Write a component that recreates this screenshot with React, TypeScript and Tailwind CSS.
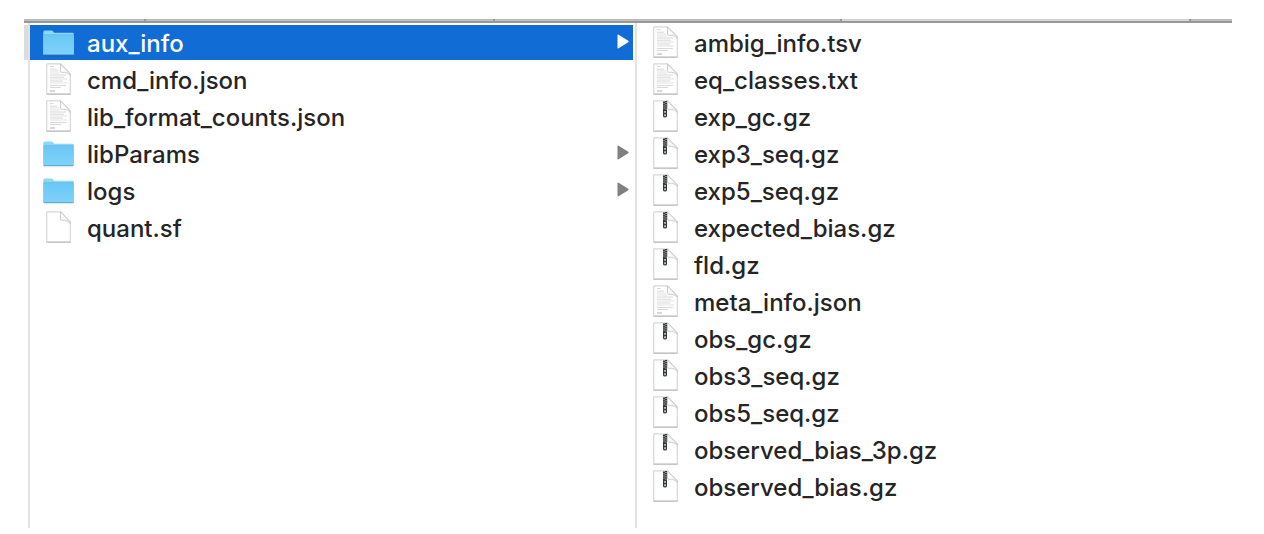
import { useId, useState } from "react";
import clsx from "clsx";

type Kind = "folder" | "text" | "blank" | "archive";

interface Entry {
  name: string;
  kind: Kind;
}

const parentEntries: Entry[] = [
  { name: "aux_info", kind: "folder" },
  { name: "cmd_info.json", kind: "text" },
  { name: "lib_format_counts.json", kind: "text" },
  { name: "libParams", kind: "folder" },
  { name: "logs", kind: "folder" },
  { name: "quant.sf", kind: "blank" },
];

const childEntries: Entry[] = [
  { name: "ambig_info.tsv", kind: "text" },
  { name: "eq_classes.txt", kind: "text" },
  { name: "exp_gc.gz", kind: "archive" },
  { name: "exp3_seq.gz", kind: "archive" },
  { name: "exp5_seq.gz", kind: "archive" },
  { name: "expected_bias.gz", kind: "archive" },
  { name: "fld.gz", kind: "archive" },
  { name: "meta_info.json", kind: "text" },
  { name: "obs_gc.gz", kind: "archive" },
  { name: "obs3_seq.gz", kind: "archive" },
  { name: "obs5_seq.gz", kind: "archive" },
  { name: "observed_bias_3p.gz", kind: "archive" },
  { name: "observed_bias.gz", kind: "archive" },
];

function FolderIcon() {
  const id = useId();
  return (
    <svg viewBox="0 0 32 32" className="h-8 w-8" aria-hidden="true">
      <defs>
        <linearGradient id={id} x1="0" y1="0" x2="0" y2="1">
          <stop offset="0" stopColor="#6ac8f5" />
          <stop offset="1" stopColor="#7fd2f9" />
        </linearGradient>
      </defs>
      <path d="M.3 28V6Q.3 4.500 1.800 4.500H8.500Q9.500 4.500 10.300 5.600L11 6.800H29.500Q30.800 6.800 30.800 8.200V28Z" fill="#8dd8f7" />
      <path d="M.3 9H30.800V28Q30.800 29 29.800 29H1.300Q.3 29 .3 28Z" fill={`url(#${id})`} />
      <path d="M.6 8.700H30.500" stroke="#5fb9e4" strokeWidth=".8" />
      <path d="M.6 28.600H30.500" stroke="#58a9d0" strokeWidth="1" />
      <path d="M1 29.800H30" stroke="#000" strokeOpacity=".12" strokeWidth=".8" />
    </svg>
  );
}

function PageIcon({ kind }: { kind: Kind }) {
  const id = useId();
  return (
    <svg viewBox="0 0 32 32" className="h-8 w-8" aria-hidden="true">
      <defs>
        <linearGradient id={id} x1="0" y1="1" x2="1" y2="0">
          <stop offset=".3" stopColor="#ffffff" />
          <stop offset="1" stopColor="#dcdcdc" />
        </linearGradient>
      </defs>
      <path d="M4.500 .8H17.500L27.300 11V31H3.700V1.600Q3.700 .8 4.500 .8Z" fill="#fff" stroke="#d8d8d8" strokeWidth="1.200" />
      <path d="M3.500 31.200H27.500" stroke="#bdbdbd" strokeWidth="1.200" />
      {kind === "text" && (
        <g stroke="#bdbdbd" strokeWidth=".8">
          <path d="M7 3.500H10.500M7 6.200H14M7 12H23M7 14.200H21M7 18H20M7 22.500H23M7 24.500H18" strokeOpacity=".75" />
          <path d="M7 8H16M7 10H17M7 16H24M7 20H24" strokeOpacity=".6" />
          <path d="M7 28H12" stroke="#999999" />
        </g>
      )}
      <path d="M17.500 .8V8Q17.500 9.500 19 9.300Q24.500 8.800 27.300 12.500V11Z" fill={`url(#${id})`} stroke="#c6c6c6" strokeWidth=".9" />
      {kind === "archive" && (
        <g>
          <path d="M13 1H17V16Q17 17.500 15 17.500Q13 17.500 13 16Z" fill="#35383a" />
          <path d="M14 1V9.500M16 2V10" stroke="#e2e2e2" strokeWidth="1" strokeDasharray="1 1.200" />
          <path d="M14.600 11V12.500H15.500V11M14.600 14.500V16H15.500V14.500Z" fill="#fff" stroke="#cfcfcf" strokeWidth=".6" />
        </g>
      )}
    </svg>
  );
}

function FileRow({ entry, selected, onSelect }: { entry: Entry; selected: boolean; onSelect: () => void }) {
  return (
    <li>
      <button
        type="button"
        onClick={onSelect}
        aria-pressed={selected}
        className={clsx(
          "flex h-[35px] w-full items-center gap-3 pl-[13px] pr-1 text-left text-2xl font-medium",
          selected ? "bg-[#116cd6] text-white" : "text-[#252525]",
        )}
      >
        <span className="mb-[2px] shrink-0">
          {entry.kind === "folder" ? <FolderIcon /> : <PageIcon kind={entry.kind} />}
        </span>
        <span className="grow truncate pt-[2px]">{entry.name}</span>
        {entry.kind === "folder" && (
          <svg viewBox="0 0 12 15" className={clsx("mb-[2px] h-[15px] w-3", selected ? "text-white" : "text-[#808080]")} aria-hidden="true">
            <path d="M.5 1.200Q.5 0 1.600 .7L11.300 6.700Q12 7.500 11.300 8.200L1.600 14.300Q.5 15 .5 13.800Z" fill="currentColor" />
          </svg>
        )}
      </button>
    </li>
  );
}

export default function App() {
  const [selected, setSelected] = useState("aux_info");
  const [selectedChild, setSelectedChild] = useState("");

  return (
    <main className="bg-white pb-[6px] pl-6 pr-8 pt-[19px] font-['Inter','Liberation_Sans',sans-serif]">
      <div className="grid h-1 grid-cols-[122fr_349fr_347fr_349fr_41fr] border-b-2 border-[#999999]">
        <div className="border-r-2 border-[#999999] bg-[#bdbdbd]" />
        <div className="border-r-2 border-[#999999] bg-[#bdbdbd]" />
        <div className="border-r-2 border-[#999999] bg-[#bdbdbd]" />
        <div className="border-r-2 border-[#999999] bg-[#d4d4d4]" />
        <div className="bg-[#bdbdbd]" />
      </div>
      <div className="grid min-h-[505px] grid-cols-[4px_609fr_595fr]">
        <div className="pt-[2px]">
          <div className="h-[35px] bg-[#dcdcdc]" />
        </div>
        <ul aria-label="Output folder" className="flex flex-col gap-[2px] border-x-2 border-[#e2e2e2] pr-[2px] pt-[2px]">
          {parentEntries.map((entry) => (
            <FileRow key={entry.name} entry={entry} selected={selected === entry.name} onSelect={() => setSelected(entry.name)} />
          ))}
        </ul>
        <ul aria-label="aux_info" className="flex flex-col gap-[2px] pt-[2px]">
          {childEntries.map((entry) => (
            <FileRow key={entry.name} entry={entry} selected={selectedChild === entry.name} onSelect={() => setSelectedChild(entry.name)} />
          ))}
        </ul>
      </div>
    </main>
  );
}
